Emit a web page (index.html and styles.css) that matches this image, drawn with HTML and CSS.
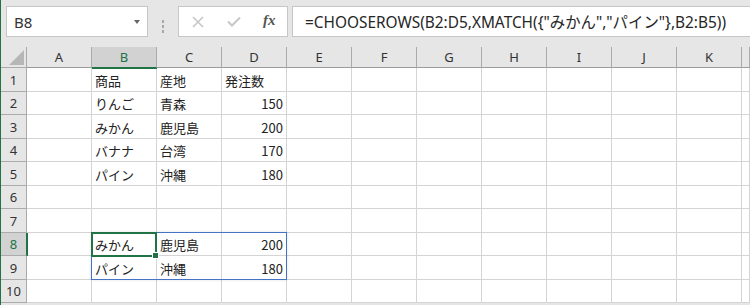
FILE: index.html
```html
<!DOCTYPE html>
<html lang="ja">
<head>
    <meta charset="UTF-8">
    <meta name="viewport" content="width=device-width, initial-scale=1.0">
    <title>CHOOSEROWS</title>
    <link rel="stylesheet" href="styles.css">
</head>
<body>
    <div class="app">
        <div class="formula-bar">
            <div class="name-box">
                <span class="name">B8</span>
                <span class="caret"></span>
            </div>
            <div class="grip"><i></i><i></i><i></i></div>
            <div class="fx-buttons">
                <span class="fx-btn">
                    <svg width="12" height="12" viewBox="0 0 12 12"><path d="M1 1 L11 11 M11 1 L1 11" stroke="#c6c6c6" stroke-width="1.6" fill="none"/></svg>
                </span>
                <span class="fx-btn">
                    <svg width="14" height="11" viewBox="0 0 14 11"><path d="M1 5.5 L5 9.5 L13 1.5" stroke="#c6c6c6" stroke-width="2" fill="none"/></svg>
                </span>
                <span class="fx-btn fx">fx</span>
            </div>
            <div class="formula">=CHOOSEROWS(B2:D5,XMATCH({"みかん","パイン"},B2:B5))</div>
        </div>
        <div class="sheet">
            <div class="grid" id="grid"></div>
            <div class="grid overlay">
                <div class="spill"></div>
                <div class="active"><span class="handle"></span></div>
            </div>
        </div>
    </div>

    <script>
        const cols = ['A', 'B', 'C', 'D', 'E', 'F', 'G', 'H', 'I', 'J', 'K', ''];
        const data = {
            1: { B: '商品', C: '産地', D: '発注数' },
            2: { B: 'りんご', C: '青森', D: 150 },
            3: { B: 'みかん', C: '鹿児島', D: 200 },
            4: { B: 'バナナ', C: '台湾', D: 170 },
            5: { B: 'パイン', C: '沖縄', D: 180 },
            8: { B: 'みかん', C: '鹿児島', D: 200 },
            9: { B: 'パイン', C: '沖縄', D: 180 }
        };
        const grid = document.getElementById('grid');

        function cell(cls, text) {
            const el = document.createElement('div');
            el.className = cls;
            if (text !== undefined) el.textContent = text;
            grid.appendChild(el);
            return el;
        }

        cell('head corner').innerHTML = '<svg width="15" height="15" viewBox="0 0 15 15"><path d="M15 0 L15 15 L0 15 Z" fill="#b7b7b7"/></svg>';
        cols.forEach(c => cell(c === 'B' ? 'head col-head selected' : 'head col-head', c));

        for (let r = 1; r <= 10; r++) {
            cell(r === 8 ? 'head row-head selected' : 'head row-head', r);
            const row = data[r] || {};
            cols.forEach(c => {
                const v = row[c];
                if (typeof v === 'number') cell('cell num', v);
                else cell('cell', v || '');
            });
        }
    </script>
</body>
</html>
```

FILE: styles.css
```css
body {
    margin: 0;
    font-family: "Noto Sans CJK JP", sans-serif;
    color: #222;
}
.app {
    height: 305px;
    overflow: hidden;
    border-left: 1px solid #217346;
    background: #e6e6e6;
}

/* formula bar */
.formula-bar {
    display: flex;
    height: 47px;
    padding: 6px 0 0 5px;
    box-sizing: border-box;
}
.name-box, .fx-buttons, .formula {
    height: 31px;
    box-sizing: border-box;
    border: 1px solid #c6c6c6;
    background: #fff;
}
.name-box {
    width: 142px;
    display: flex;
    align-items: center;
    justify-content: space-between;
    padding: 0 7px 0 7px;
}
.name {
    font-family: "Noto Sans", sans-serif;
    font-size: 15px;
    color: #333;
}
.caret {
    width: 0;
    height: 0;
    border-left: 3.5px solid transparent;
    border-right: 3.5px solid transparent;
    border-top: 4px solid #666;
}
.grip {
    width: 30px;
    display: flex;
    flex-direction: column;
    align-items: center;
    justify-content: center;
    gap: 2px;
    padding-bottom: 1px;
}
.grip i {
    width: 2px;
    height: 3px;
    background: #a8a8a8;
}
.fx-buttons {
    width: 110px;
    display: flex;
    padding-left: 1px;
}
.fx-btn {
    width: 36px;
    display: flex;
    align-items: center;
    justify-content: center;
}
.fx {
    font-family: "Liberation Serif", serif;
    font-style: italic;
    font-weight: bold;
    font-size: 15px;
    color: #555;
    padding-bottom: 2px;
}
.formula {
    flex: 1;
    margin-left: 4px;
    margin-right: -2px;
    padding-left: 12px;
    display: flex;
    align-items: center;
    font-family: "Noto Sans", "Noto Sans CJK JP", sans-serif;
    font-size: 15.4px;
    color: #262626;
    white-space: nowrap;
}

/* sheet */
.sheet {
    position: relative;
}
.grid {
    display: grid;
    grid-template-columns: 26px repeat(11, 65px) 1fr;
    grid-template-rows: 21px 24px 23px 24px 23px 24px 23px 24px 23px 24px 23px;
}
.grid > div {
    box-sizing: border-box;
}
.head {
    background: #e6e6e6;
    border-right: 1px solid #ababab;
    border-bottom: 1px solid #ababab;
    display: flex;
    align-items: center;
    justify-content: center;
    font-family: "Noto Sans", sans-serif;
    font-size: 13px;
    color: #333;
}
.col-head {
    border-bottom-color: #9b9b9b;
}
.corner {
    align-items: flex-end;
    justify-content: flex-end;
    padding: 0 2px 2px 0;
}
.head.selected {
    background: #d2d2d2;
    color: #217346;
    position: relative;
    z-index: 1;
}
.col-head.selected {
    border-bottom-color: #217346;
    box-shadow: 0 1px 0 #217346;
}
.row-head.selected {
    border-right-color: #217346;
    box-shadow: 1px 0 0 #217346;
}
.cell {
    background: #fff;
    border-right: 1px solid #d4d4d4;
    border-bottom: 1px solid #d4d4d4;
    display: flex;
    align-items: center;
    padding: 1px 3px 0;
    font-size: 13px;
    color: #222;
    white-space: nowrap;
    overflow: hidden;
}
.num {
    justify-content: flex-end;
}

/* selection overlays */
.overlay {
    position: absolute;
    inset: 0;
    pointer-events: none;
}
.spill {
    grid-column: 3 / 6;
    grid-row: 9 / 11;
    margin: -1px 0 0 -1px;
    border: 1px solid #4472c4;
    box-shadow: 0 0 3px rgba(0, 0, 0, 0.12);
}
.active {
    grid-column: 3;
    grid-row: 9;
    margin: -1px 0 -1px -1px;
    border: 2px solid #217346;
    position: relative;
}
.handle {
    position: absolute;
    right: -4px;
    bottom: -4px;
    width: 5px;
    height: 5px;
    background: #217346;
    border: 1px solid #fff;
}
```
